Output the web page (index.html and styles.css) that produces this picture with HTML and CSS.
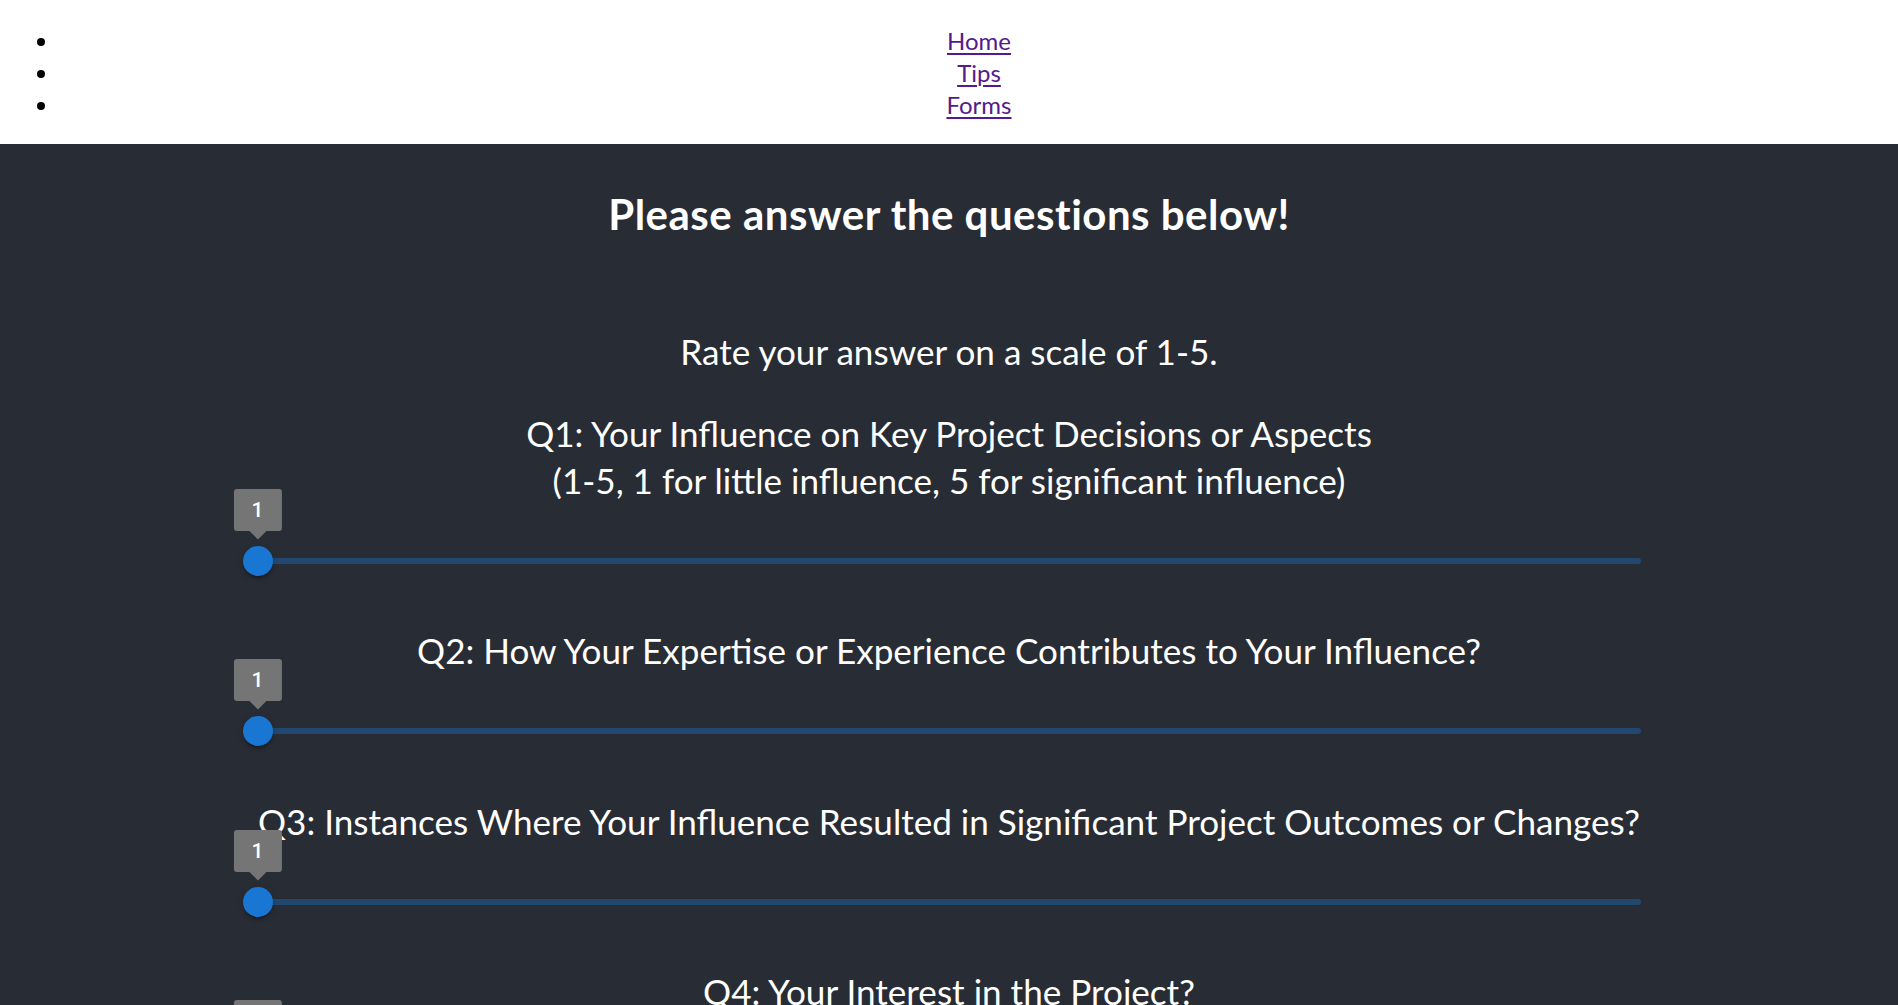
FILE: index.html
```html
<!DOCTYPE html>
<html lang="en">
<head>
<meta charset="utf-8">
<title>Forms</title>
<link rel="stylesheet" href="styles.css">
</head>
<body>
<nav class="nav">
  <ul class="nav-list">
    <li><a class="nav-link" href="#">Home</a></li>
    <li><a class="nav-link" href="#">Tips</a></li>
    <li><a class="nav-link" href="#">Forms</a></li>
  </ul>
</nav>
<main class="app">
  <h3 class="title">Please answer the questions below!</h3>
  <form class="form">
    <p class="intro">Rate your answer on a scale of 1-5.</p>

    <div class="question">
      <p class="q-text">Q1: Your Influence on Key Project Decisions or Aspects<br>(1-5, 1 for little influence, 5 for significant influence)</p>
      <div class="slider">
        <span class="rail"></span>
        <span class="thumb"><span class="value-label">1</span></span>
      </div>
    </div>

    <div class="question">
      <p class="q-text">Q2: How Your Expertise or Experience Contributes to Your Influence?</p>
      <div class="slider">
        <span class="rail"></span>
        <span class="thumb"><span class="value-label">1</span></span>
      </div>
    </div>

    <div class="question">
      <p class="q-text">Q3: Instances Where Your Influence Resulted in Significant Project Outcomes or Changes?</p>
      <div class="slider">
        <span class="rail"></span>
        <span class="thumb"><span class="value-label">1</span></span>
      </div>
    </div>

    <div class="question">
      <p class="q-text">Q4: Your Interest in the Project?</p>
      <div class="slider">
        <span class="rail"></span>
        <span class="thumb"><span class="value-label">1</span></span>
      </div>
    </div>
  </form>
</main>
</body>
</html>
```
FILE: styles.css
```css
html, body {
  margin: 0;
  padding: 0;
}

body {
  font-family: "Lato", "Liberation Sans", sans-serif;
  background: #ffffff;
}

/* ---------- nav ---------- */
.nav {
  background: #ffffff;
}

.nav-list {
  margin: 0;
  padding: 25px 0 23px 60px;
  font-size: 24px;
  line-height: 32px;
  text-align: center;
  color: #000000;
}

.nav-link {
  color: #551a8b;
  text-decoration: underline;
  text-decoration-thickness: 2px;
  text-underline-offset: 3px;
}

/* ---------- main ---------- */
.app {
  background: #282c34;
  color: #ffffff;
  text-align: center;
  padding: 43px 0 120px;
  min-height: 900px;
}

.title {
  margin: 0;
  font-size: 42px;
  font-weight: 700;
  line-height: 55px;
  letter-spacing: 0.5px;
}

.form {
  display: flex;
  flex-direction: column;
  align-items: center;
  gap: 44px;
}

.intro {
  margin: 85.5px 0 -9px;
  font-size: 35.1px;
  line-height: 47px;
}

.question {
  width: 100%;
  display: flex;
  flex-direction: column;
  align-items: center;
  gap: 34.5px;
}

.q-text {
  margin: 0;
  font-size: 35.1px;
  line-height: 47px;
  white-space: nowrap;
}

/* ---------- slider (MUI look) ---------- */
.slider {
  position: relative;
  width: 1383px;
  padding: 19.5px 0;
  box-sizing: content-box;
}

.rail {
  display: block;
  height: 6px;
  border-radius: 6px;
  background: #1976d2;
  opacity: 0.38;
}

.thumb {
  position: absolute;
  left: 0;
  top: 50%;
  width: 30px;
  height: 30px;
  border-radius: 50%;
  background: #1976d2;
  transform: translate(-50%, -50%);
  box-shadow: 0 4.5px 1.5px -3px rgba(0, 0, 0, 0.2),
              0 3px 3px 0 rgba(0, 0, 0, 0.14),
              0 1.5px 7.5px 0 rgba(0, 0, 0, 0.12);
}

.value-label {
  position: absolute;
  left: 50%;
  bottom: 100%;
  margin-bottom: 15px;
  transform: translateX(-50%);
  padding: 6px 18px;
  background: #757575;
  border-radius: 3px;
  color: #ffffff;
  font-family: "Roboto", "Liberation Sans", sans-serif;
  font-weight: 500;
  font-size: 21px;
  line-height: 30px;
  letter-spacing: 0.2px;
  white-space: nowrap;
}

.value-label::before {
  content: "";
  position: absolute;
  left: 50%;
  bottom: 0;
  width: 12px;
  height: 12px;
  background: #757575;
  transform: translate(-50%, 50%) rotate(45deg);
  z-index: -1;
}
```
